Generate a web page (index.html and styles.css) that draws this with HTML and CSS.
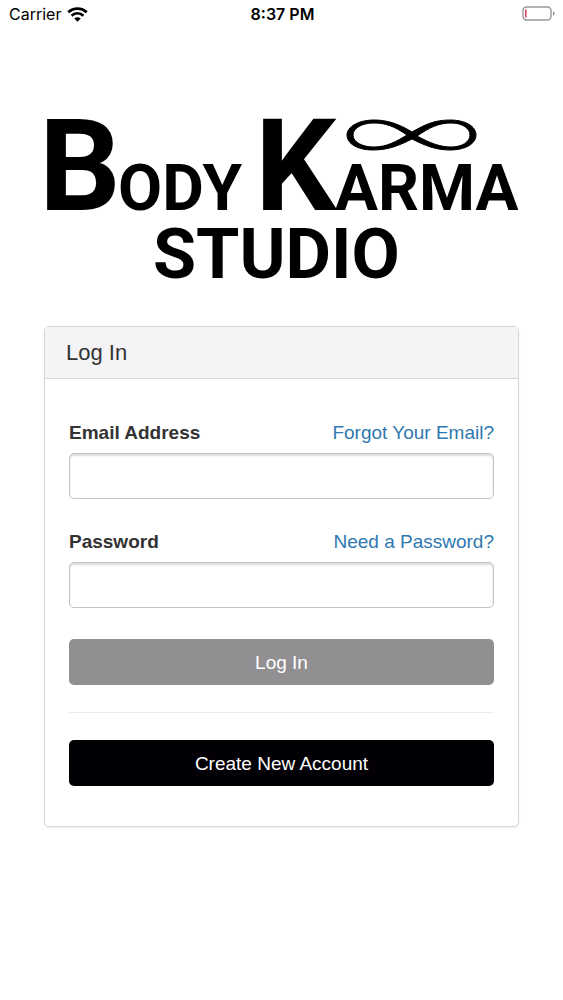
FILE: index.html
```html
<!DOCTYPE html>
<html lang="en">
<head>
<meta charset="utf-8">
<meta name="viewport" content="width=device-width, initial-scale=1">
<title>Body Karma Studio</title>
<link rel="stylesheet" href="styles.css">
</head>
<body>
<header class="status">
  <div class="carrier">
    <span>Carrier</span>
    <svg class="wifi" viewBox="0 0 20 14" aria-hidden="true">
      <path d="M1.2 4.9a12.6 12.6 0 0 1 17.6 0" />
      <path d="M4.4 8.1a8 8 0 0 1 11.2 0" />
      <path class="dot" d="M6.9 10.9a4.4 4.4 0 0 1 6.2 0L10 14z" />
    </svg>
  </div>
  <time class="clock">8:37 PM</time>
  <svg class="battery" viewBox="0 0 34 16" aria-hidden="true">
    <rect class="shell" x="1" y="1" width="28" height="13" rx="3.5" />
    <rect class="level" x="3" y="3.5" width="1.6" height="8" />
    <path class="tip" d="M31 5.5c2 .6 2 3.400 0 4z" />
  </svg>
</header>
<main class="page">
  <svg class="logo" viewBox="0 0 475 174" role="img" aria-label="Body Karma Studio">
    <text class="large" x="-5" y="100">B</text>
    <text class="small" x="74" y="100">ODY</text>
    <text class="large" x="211" y="100">K</text>
    <text class="small" x="291" y="100">ARMA</text>
    <text class="studio" x="109" y="168">STUDIO</text>
    <path class="infinity" fill-rule="evenodd" d="M368 22C352 12 340 10 330 10C314 10 303 17 303 25C303 34 314 40 329 40C345 40 356 35 368 29C382 36 392 40 406 40C421 40 432 34 432 25C432 16 421 10 406 10C391 10 382 14 368 22ZM363 25C350 16 341 13 330 13C318 13 309 18 309 25C309 32 318 37 330 37C343 37 353 31 363 25ZM373 26C386 33 396 37 407 37C418 37 426 32 426 25C426 18 418 13 407 13C394 13 385 18 373 26Z" />
  </svg>
  <section class="panel">
    <h1 class="panel-title">Log In</h1>
    <form class="panel-body">
      <div class="field">
        <div class="field-head">
          <label for="email">Email Address</label>
          <a href="#">Forgot Your Email?</a>
        </div>
        <input id="email" type="email">
      </div>
      <div class="field">
        <div class="field-head">
          <label for="password">Password</label>
          <a href="#">Need a Password?</a>
        </div>
        <input id="password" type="password">
      </div>
      <button class="button login" type="submit">Log In</button>
      <hr class="rule">
      <button class="button create" type="button">Create New Account</button>
    </form>
  </section>
</main>
</body>
</html>
```

FILE: styles.css
```css
* {
  box-sizing: border-box;
}

body {
  margin: 0;
  background: #fff;
  color: #333;
  font-family: "Liberation Sans", Arial, sans-serif;
  font-size: 19px;
  line-height: 24px;
}

.status {
  display: grid;
  grid-template-columns: 1fr auto 1fr;
  align-items: center;
  height: 28px;
  padding: 0 7px 0 9px;
  color: #000;
  font-family: Inter, sans-serif;
  font-size: 16px;
}

.carrier {
  display: flex;
  align-items: center;
  gap: 6px;
}

.wifi {
  width: 21px;
  height: 15px;
  fill: none;
  stroke: #000;
  stroke-width: 2.6;
}

.wifi .dot {
  fill: #000;
  stroke: none;
}

.clock {
  font-weight: 600;
}

.battery {
  justify-self: end;
  width: 34px;
  height: 16px;
}

.shell {
  fill: none;
  stroke: #999;
  stroke-width: 1.4;
}

.level {
  fill: #e0405a;
}

.tip {
  fill: #888;
}

.page {
  padding: 82px 44px 40px;
}

.logo {
  display: block;
  width: 100%;
  margin-bottom: 42px;
  overflow: visible;
  fill: #000;
  font-family: Roboto, sans-serif;
  font-weight: 700;
  line-height: 1;
}

.large {
  font-size: 128px;
}

.small {
  font-size: 64px;
}

.studio {
  font-size: 70px;
}

.infinity {
  stroke: #000;
  stroke-width: 1;
}

.panel {
  border: 1px solid #d6d5d8;
  border-radius: 5px;
  box-shadow: 0 1px 2px rgba(0, 0, 0, 0.08);
}

.panel-title {
  margin: 0;
  padding: 14px 21px 13px;
  border-bottom: 1px solid #d6d5d8;
  border-radius: 4px 4px 0 0;
  background: #f4f3f6;
  font-size: 22px;
  font-weight: 400;
  line-height: 24px;
}

.panel-body {
  display: flex;
  flex-direction: column;
  padding: 42px 24px 40px;
}

.field {
  display: flex;
  flex-direction: column;
  gap: 8px;
  margin-bottom: 31px;
}

.field-head {
  display: flex;
  justify-content: space-between;
}

.field-head label {
  font-weight: 700;
}

.field-head a {
  color: #2f78b0;
  text-decoration: none;
}

.field input {
  width: 100%;
  height: 46px;
  padding: 0 14px;
  border: 1px solid #c4c4c6;
  border-radius: 5px;
  background: #fff;
  box-shadow: inset 0 2px 2px rgba(0, 0, 0, 0.14);
  font: inherit;
}

.button {
  height: 46px;
  padding: 1px 0 0;
  border: 0;
  border-radius: 5px;
  color: #fff;
  font: inherit;
}

.login {
  background: #918f92;
}

.create {
  background: #020004;
}

.rule {
  width: 100%;
  margin: 27px 0;
  border: 0;
  border-top: 1px solid #ebebed;
}
```
